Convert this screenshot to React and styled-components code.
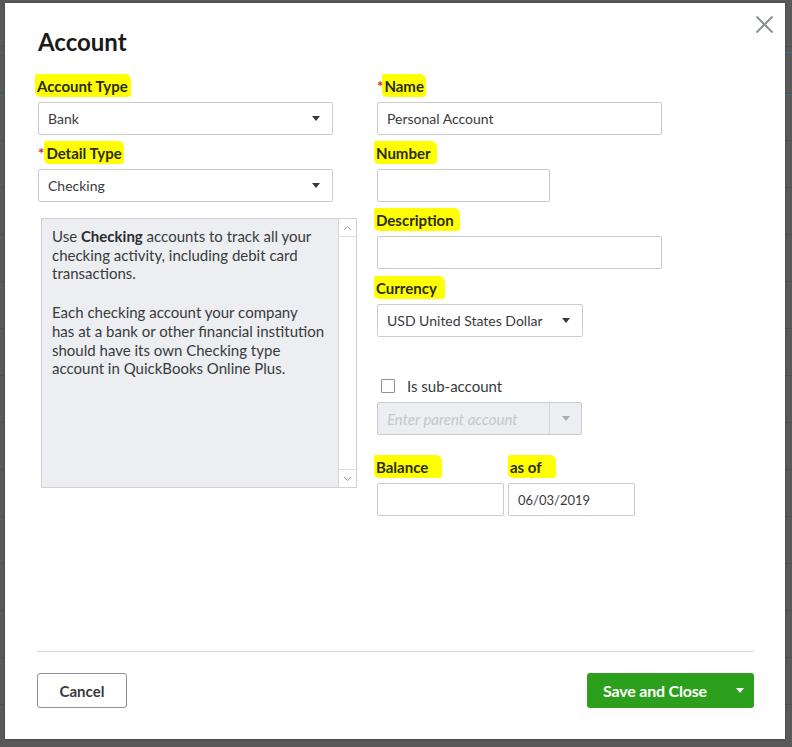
import React from "react";
import styled, { createGlobalStyle } from "styled-components";

const Global = createGlobalStyle`
  html, body { margin: 0; padding: 0; }
  body { font-family: Lato, "Open Sans", sans-serif; color: #393a3d; }
  * { box-sizing: border-box; }
`;

const Backdrop = styled.div`
  width: 792px;
  height: 747px;
  background-color: #595959;
  background-image:
    linear-gradient(to bottom, transparent 52px, #3f6f86 52px, #3f6f86 53px, transparent 53px),
    linear-gradient(to bottom, transparent 94px, #3f6f86 94px, #3f6f86 95px, transparent 95px),
    repeating-linear-gradient(to bottom, transparent 0, transparent 46px, #4f4f4f 46px, #4f4f4f 47px);
  padding: 3px 7px 8px 5px;
  display: flex;
`;

const Modal = styled.div`
  position: relative;
  flex: 1;
  background: #fff;
  display: flex;
  flex-direction: column;
  padding: 25px 31px 31px 33px;
  box-shadow: 0 0 2px rgba(0, 0, 0, 0.4);
`;

const CloseButton = styled.button`
  position: absolute;
  top: 9px;
  right: 9px;
  width: 24px;
  height: 24px;
  border: none;
  background: none;
  padding: 0;
  cursor: pointer;
  display: flex;
  align-items: center;
  justify-content: center;
`;

const Title = styled.h1`
  margin: 0 0 21px;
  font-size: 24px;
  line-height: 28px;
  font-weight: 700;
  color: #1a1a1a;
`;

const Body = styled.div`
  flex: 1;
  display: grid;
  grid-template-columns: 319px 1fr;
  column-gap: 20px;
  align-items: start;
`;

const Column = styled.div`
  display: flex;
  flex-direction: column;
`;

const Field = styled.div`
  display: flex;
  flex-direction: column;
  margin-bottom: ${(p) => p.$mb ?? 9}px;
`;

const Label = styled.div`
  height: 18px;
  font-size: 15px;
  font-weight: 700;
  line-height: 18px;
  margin-bottom: 7px;
  display: flex;
  align-items: center;
`;

const Highlight = styled.span`
  background: #ffff00;
  line-height: 18px;
  padding: 3px ${(p) => p.$pr ?? 2}px 2px 2px;
  margin: -3px 0 -2px ${(p) => p.$ml ?? -3}px;
  border-radius: 2px 6px 3px 5px;
  display: inline-flex;
  align-items: center;
  color: #2b2c10;
`;

const Star = styled.span`
  color: #d52b1e;
  font-weight: 700;
  margin-right: 1px;
`;

const InputBox = styled.div`
  width: ${(p) => p.$w}px;
  height: 33px;
  border: 1px solid #c9cbcf;
  border-radius: 2px;
  background: ${(p) => (p.$disabled ? "#eceef1" : "#fff")};
  display: flex;
  align-items: center;
  padding-left: 9px;
  font-size: ${(p) => p.$fs ?? 14}px;
  color: #393a3d;
`;

const Value = styled.span`
  flex: 1;
  white-space: nowrap;
`;

const Placeholder = styled.span`
  flex: 1;
  font-style: italic;
  color: #c4c7cc;
  font-size: 15px;
`;

const Caret = styled.span`
  width: 0;
  height: 0;
  border-left: 4.5px solid transparent;
  border-right: 4.5px solid transparent;
  border-top: 5px solid ${(p) => p.$color || "#393a3d"};
  margin-right: ${(p) => p.$mr ?? 12}px;
`;

const CaretCell = styled.div`
  width: 32px;
  align-self: stretch;
  border-left: 1px solid #d4d7dc;
  display: flex;
  align-items: center;
  justify-content: center;
`;

const InfoBox = styled.div`
  margin-left: 3px;
  width: 316px;
  height: 270px;
  background: #eceef1;
  border: 1px solid #cfd1d4;
  display: flex;
`;

const InfoText = styled.div`
  flex: 1;
  padding: 8px 10px;
  font-size: 15px;
  line-height: 18.7px;
  color: #393a3d;
  p { margin: 0 0 20px; }
  b { font-weight: 700; color: #2b2c2f; }
`;

const ScrollBar = styled.div`
  width: 18px;
  background: #fff;
  border-left: 1px solid #d6d6d6;
  display: flex;
  flex-direction: column;
  justify-content: space-between;
`;

const ScrollBtn = styled.div`
  height: 18px;
  display: flex;
  align-items: center;
  justify-content: center;
  border-${(p) => (p.$up ? "bottom" : "top")}: 1px solid #dcdcdc;
`;

const CheckRow = styled.label`
  display: flex;
  align-items: center;
  margin: 40px 0 7px 4px;
  height: 18px;
  font-size: 15px;
  color: #393a3d;
`;

const CheckBox = styled.span`
  width: 14px;
  height: 14px;
  border: 1px solid #8d9096;
  border-radius: 1px;
  margin-right: 12px;
  background: #fff;
`;

const Row = styled.div`
  display: flex;
  gap: 4px;
  margin-top: 23px;
`;

const Footer = styled.div`
  border-top: 1px solid #d4d7dc;
  padding-top: 21px;
  margin-left: -1px;
  display: flex;
  justify-content: space-between;
`;

const CancelButton = styled.button`
  width: 90px;
  height: 35px;
  border: 1px solid #8d9096;
  border-radius: 3px;
  background: #fff;
  font-family: Lato, sans-serif;
  font-size: 15px;
  font-weight: 700;
  color: #393a3d;
  cursor: pointer;
`;

const SaveButton = styled.div`
  width: 167px;
  height: 35px;
  border-radius: 3px;
  background: #2ca01c;
  display: flex;
  align-items: center;
  color: #fff;
  font-size: 16px;
  font-weight: 700;
`;

const SaveLabel = styled.span`
  flex: 1;
  padding-left: 16px;
  letter-spacing: -0.2px;
`;

const Chevron = ({ up }) => (
  <svg width="9" height="6" viewBox="0 0 9 6">
    <path
      d={up ? "M1 5 L4.5 1.5 L8 5" : "M1 1 L4.5 4.5 L8 1"}
      fill="none"
      stroke="#9a9a9a"
      strokeWidth="1"
    />
  </svg>
);

export default function App() {
  return (
    <>
      <Global />
      <Backdrop>
        <Modal>
          <CloseButton aria-label="Close">
            <svg width="19" height="19" viewBox="0 0 19 19">
              <path d="M1.5 1.5 L17.5 17.5 M17.5 1.5 L1.5 17.5" stroke="#8d9096" strokeWidth="2" />
            </svg>
          </CloseButton>
          <Title>Account</Title>
          <Body>
            <Column>
              <Field>
                <Label>
                  <Highlight $pr={3}>Account Type</Highlight>
                </Label>
                <InputBox $w={295}>
                  <Value>Bank</Value>
                  <Caret />
                </InputBox>
              </Field>
              <Field $mb={16}>
                <Label>
                  <Star>*</Star>
                  <Highlight $ml={-1}>Detail Type</Highlight>
                </Label>
                <InputBox $w={295}>
                  <Value>Checking</Value>
                  <Caret />
                </InputBox>
              </Field>
              <InfoBox>
                <InfoText>
                  <p>
                    Use <b>Checking</b> accounts to track all your checking activity, including debit
                    card transactions.
                  </p>
                  <p>
                    Each checking account your company
                    <br />
                    has at a bank or other financial institution
                    <br />
                    should have its own Checking type
                    <br />
                    account in QuickBooks Online Plus.
                  </p>
                </InfoText>
                <ScrollBar>
                  <ScrollBtn $up>
                    <Chevron up />
                  </ScrollBtn>
                  <ScrollBtn>
                    <Chevron />
                  </ScrollBtn>
                </ScrollBar>
              </InfoBox>
            </Column>
            <Column>
              <Field>
                <Label>
                  <Star>*</Star>
                  <Highlight $ml={-2}>Name</Highlight>
                </Label>
                <InputBox $w={285}>
                  <Value>Personal Account</Value>
                </InputBox>
              </Field>
              <Field>
                <Label>
                  <Highlight $pr={6}>Number</Highlight>
                </Label>
                <InputBox $w={173} />
              </Field>
              <Field $mb={10}>
                <Label>
                  <Highlight $pr={6}>Description</Highlight>
                </Label>
                <InputBox $w={285} />
              </Field>
              <Field $mb={0}>
                <Label>
                  <Highlight $pr={8}>Currency</Highlight>
                </Label>
                <InputBox $w={206}>
                  <Value>USD United States Dollar</Value>
                  <Caret />
                </InputBox>
              </Field>
              <CheckRow>
                <CheckBox />
                Is sub-account
              </CheckRow>
              <InputBox $w={205} $disabled>
                <Placeholder>Enter parent account</Placeholder>
                <CaretCell>
                  <Caret $color="#a9adb3" $mr={0} />
                </CaretCell>
              </InputBox>
              <Row>
                <Field $mb={0}>
                  <Label>
                    <Highlight $pr={14}>Balance</Highlight>
                  </Label>
                  <InputBox $w={127} />
                </Field>
                <Field $mb={0}>
                  <Label>
                    <Highlight $ml={0} $pr={14}>as of</Highlight>
                  </Label>
                  <InputBox $w={127} $fs={13}>
                    <Value>06/03/2019</Value>
                  </InputBox>
                </Field>
              </Row>
            </Column>
          </Body>
          <Footer>
            <CancelButton>Cancel</CancelButton>
            <SaveButton>
              <SaveLabel>Save and Close</SaveLabel>
              <Caret $color="#fff" $mr={10} />
            </SaveButton>
          </Footer>
        </Modal>
      </Backdrop>
    </>
  );
}
